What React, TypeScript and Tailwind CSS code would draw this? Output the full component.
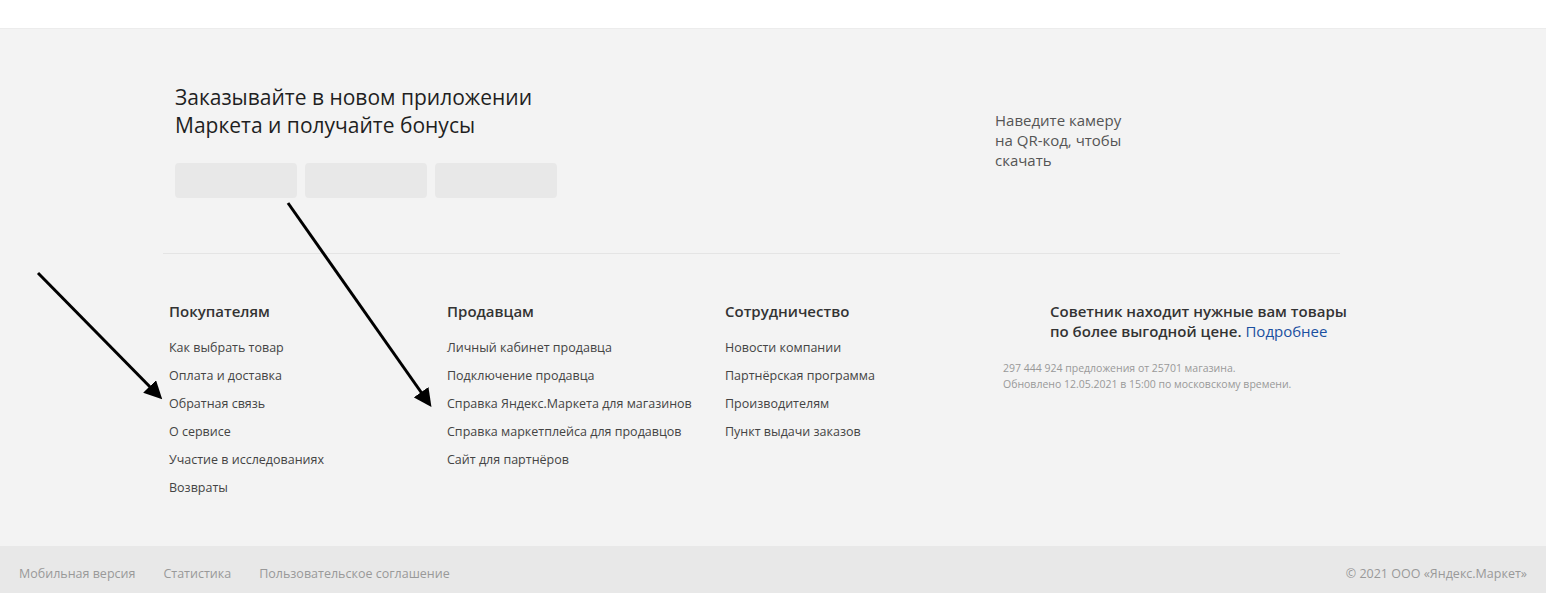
const buyers = [
  "Как выбрать товар",
  "Оплата и доставка",
  "Обратная связь",
  "О сервисе",
  "Участие в исследованиях",
  "Возвраты",
];

const sellers = [
  "Личный кабинет продавца",
  "Подключение продавца",
  "Справка Яндекс.Маркета для магазинов",
  "Справка маркетплейса для продавцов",
  "Сайт для партнёров",
];

const partners = [
  "Новости компании",
  "Партнёрская программа",
  "Производителям",
  "Пункт выдачи заказов",
];

function LinkColumn({ title, links }: { title: string; links: string[] }) {
  return (
    <div className="w-[278px] shrink-0">
      <h3 className="text-[15px] font-semibold leading-[20px] text-[#333]">{title}</h3>
      <ul className="mt-[13px]">
        {links.map((link) => (
          <li key={link} className="text-[12.5px] leading-[28px] text-[#444]">
            <a href="#">{link}</a>
          </li>
        ))}
      </ul>
    </div>
  );
}

export default function App() {
  return (
    <div className="relative h-[593px] w-[1546px] overflow-hidden bg-white font-['Open_Sans',sans-serif]">
      <div className="h-[29px] border-b border-[#ececec] bg-white" />
      <footer className="bg-[#f3f3f3]">
        <div className="ml-[163px] w-[1177px]">
          <div className="flex pt-[54px]">
            <div className="w-[832px] shrink-0 pl-3">
              <h2 className="text-[21px] font-normal leading-[28px] text-[#1f1f1f]">
                Заказывайте в новом приложении
                <br />
                Маркета и получайте бонусы
              </h2>
              <div className="mt-6 flex gap-2">
                <div className="h-[35px] w-[122px] rounded bg-[#e8e8e8]" />
                <div className="h-[35px] w-[122px] rounded bg-[#e8e8e8]" />
                <div className="h-[35px] w-[122px] rounded bg-[#e8e8e8]" />
              </div>
            </div>
            <p className="mt-[27px] text-[15px] leading-[20px] text-[#555]">
              Наведите камеру
              <br />
              на QR-код, чтобы
              <br />
              скачать
            </p>
          </div>
          <div className="mt-[55px] h-px bg-[#e4e4e4]" />
          <div className="flex pb-[44px] pl-[6px] pt-[47px]">
            <LinkColumn title="Покупателям" links={buyers} />
            <LinkColumn title="Продавцам" links={sellers} />
            <LinkColumn title="Сотрудничество" links={partners} />
            <div className="whitespace-nowrap">
              <p className="ml-[47px] text-[15px] font-semibold leading-[20px] text-[#333]">
                Советник находит нужные вам товары
                <br />
                по более выгодной цене.{" "}
                <a href="#" className="font-normal text-[#1a4fa0]">
                  Подробнее
                </a>
              </p>
              <p className="mt-[19px] text-[10.5px] leading-[16px] text-[#999]">
                297 444 924 предложения от 25701 магазина.
                <br />
                Обновлено 12.05.2021 в 15:00 по московскому времени.
              </p>
            </div>
          </div>
        </div>
      </footer>
      <div className="flex h-[47px] items-center justify-between bg-[#e8e8e8] px-[19px] pt-[10px] text-[12.5px] text-[#999]">
        <div className="flex gap-7">
          <a href="#">Мобильная версия</a>
          <a href="#">Статистика</a>
          <a href="#">Пользовательское соглашение</a>
        </div>
        <span>© 2021 ООО «Яндекс.Маркет»</span>
      </div>

      {/* annotation arrows */}
      <svg className="pointer-events-none absolute inset-0" width="1546" height="593">
        <defs>
          <marker id="head" markerWidth="6" markerHeight="6" refX="4" refY="3" orient="auto" markerUnits="strokeWidth">
            <path d="M0,0 L6,3 L0,6 Z" fill="#000" />
          </marker>
        </defs>
        <line x1="38" y1="273" x2="158" y2="395" stroke="#000" strokeWidth="3" markerEnd="url(#head)" />
        <line x1="288" y1="203" x2="428" y2="402" stroke="#000" strokeWidth="3" markerEnd="url(#head)" />
      </svg>
    </div>
  );
}
